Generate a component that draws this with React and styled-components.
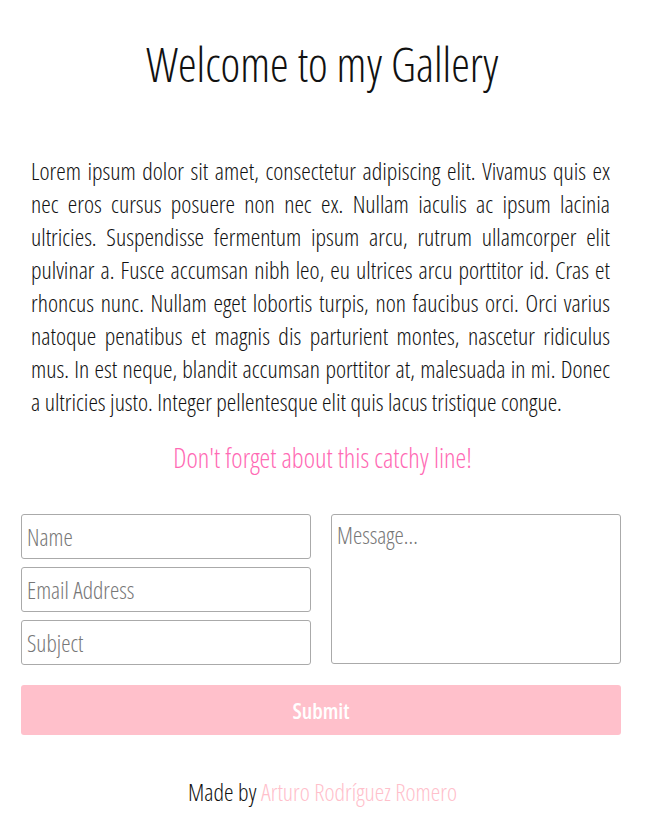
import React from 'react';
import styled, { createGlobalStyle } from 'styled-components';

const Global = createGlobalStyle`
    body {
        margin: 0;
        background: #fff;
        font-family: 'Open Sans', 'Liberation Sans Narrow', sans-serif;
        font-stretch: condensed;
        font-weight: 300;
        color: #111;
    }
`

const Page = styled.div`
    width: 645px;
    display: flex;
    flex-direction: column;
    align-items: center;
`
const Title = styled.h1`
    margin: 34px 0 0;
    font-size: 47px;
    font-weight: 300;
    line-height: 60px;
`
const Text = styled.p`
    margin: 60px 0 0;
    padding: 0 35px 0 31px;
    font-size: 24px;
    line-height: 33px;
    text-align: justify;
`
const Catchy = styled.p`
    margin: 22px 0 0;
    font-size: 27px;
    line-height: 36px;
    color: hotpink;
`
const Form = styled.form`
    align-self: flex-start;
    margin: 38px 0 0 21px;
    width: 600px;
    display: grid;
    grid-template-columns: minmax(0, 1fr) minmax(0, 1fr);
    column-gap: 20px;
    row-gap: 20px;
`
const Column = styled.div`
    display: flex;
    flex-direction: column;
    gap: 8px;
`
const fieldStyle = `
    box-sizing: border-box;
    width: 100%;
    border: 1px solid #aaa;
    border-radius: 3px;
    font-family: inherit;
    font-stretch: condensed;
    font-weight: 300;
    font-size: 23.5px;
    padding: 4px 5px;
    outline: none;
    &::placeholder { color: #777; }
`
const Input = styled.input`
    ${fieldStyle}
    height: 45px;
`
const Message = styled.textarea`
    ${fieldStyle}
    height: 150px;
    resize: none;
`
const Submit = styled.button`
    grid-column: 1 / 3;
    height: 50px;
    border: none;
    border-radius: 3px;
    background: pink;
    color: #fff;
    font-family: inherit;
    font-stretch: condensed;
    font-weight: 600;
    font-size: 22px;
`
const Footer = styled.p`
    margin: 41px 0 0;
    font-size: 24px;
    line-height: 32px;
`
const Link = styled.a`
    color: pink;
    text-decoration: none;
`

function App () {
    return(
        <Page>
            <Global />
            <Title>Welcome to my Gallery</Title>
            <Text>
                Lorem ipsum dolor sit amet, consectetur adipiscing elit. Vivamus quis ex nec eros cursus posuere non nec ex. Nullam iaculis ac ipsum lacinia ultricies. Suspendisse fermentum ipsum arcu, rutrum ullamcorper elit pulvinar a. Fusce accumsan nibh leo, eu ultrices arcu porttitor id. Cras et rhoncus nunc. Nullam eget lobortis turpis, non faucibus orci. Orci varius natoque penatibus et magnis dis parturient montes, nascetur ridiculus mus. In est neque, blandit accumsan porttitor at, malesuada in mi. Donec a ultricies justo. Integer pellentesque elit quis lacus tristique congue.
            </Text>
            <Catchy>Don't forget about this catchy line!</Catchy>
            <Form onSubmit={e => e.preventDefault()}>
                <Column>
                    <Input placeholder="Name" />
                    <Input placeholder="Email Address" />
                    <Input placeholder="Subject" />
                </Column>
                <Message placeholder="Message..." />
                <Submit type="submit">Submit</Submit>
            </Form>
            <Footer>Made by <Link href="#">Arturo Rodríguez Romero</Link></Footer>
        </Page>
    )
}

export default App;
